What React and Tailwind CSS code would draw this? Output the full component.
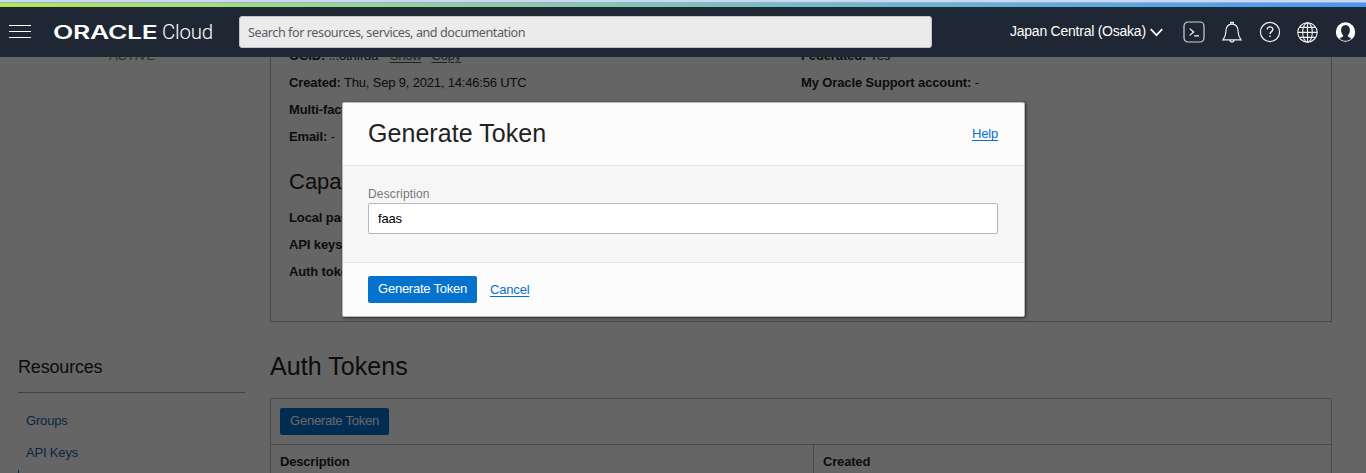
import React from "react";

function Row({ label, children }) {
  return (
    <div className="h-[27px] whitespace-nowrap leading-[27px]">
      <span className="font-bold tracking-[-0.12px]">{label}:</span> {children}
    </div>
  );
}

function Header() {
  return (
    <header className="flex h-[50px] shrink-0 items-center bg-[#1e2733] text-white">
      <div className="ml-[9px] flex w-[22px] flex-col gap-[5px] pb-[1px]">
        <span className="h-px bg-white" />
        <span className="h-px bg-white" />
        <span className="h-px bg-white" />
      </div>
      <svg className="ml-[21px] h-[24px] w-[164px]" viewBox="0 0 164 24" fill="#fff">
        <text x="1" y="19.4" fontFamily="Inter, sans-serif" fontSize="18" fontWeight="600" textLength="104.5" lengthAdjust="spacingAndGlyphs">ORACLE</text>
        <text x="110" y="19.4" fontFamily="Roboto, sans-serif" fontWeight="300" fontSize="20" textLength="51" lengthAdjust="spacingAndGlyphs">Cloud</text>
      </svg>
      <div className="ml-[23px] flex h-8 w-[693px] items-center rounded-[3px] border border-[#c0c4c8] bg-[#ebebeb] pl-2 font-['Noto_Sans',sans-serif] text-[12.6px] tracking-[-0.43px] text-[#5a5d61]">
        <span className="pt-[2px]">Search for resources, services, and documentation</span>
      </div>
      <div className="ml-[78px] flex w-[154px] items-center gap-[4px] pb-px text-[14px] tracking-[-0.24px] whitespace-nowrap">
        <span>Japan Central (Osaka)</span>
        <svg className="mt-[2px] h-[9px] w-[13px] shrink-0" viewBox="0 0 13 9" fill="none" stroke="#fff" strokeWidth="1.7">
          <path d="M.8 1.2 6.5 7.2 12.2 1.2" />
        </svg>
      </div>
      <svg className="ml-[18px] h-6 w-6 shrink-0" viewBox="0 0 24 24" fill="none" stroke="#d0d3d6">
        <rect x="2" y="2" width="20" height="20" rx="4" strokeWidth="1.2" />
        <path d="M7.7 8.6 11.7 12 7.7 15.4M12.2 15.9H17" strokeWidth="1.2" stroke="#fff" />
      </svg>
      <svg className="ml-[14px] h-6 w-6 shrink-0" viewBox="0 0 24 24" fill="none" stroke="#f0f0f0" strokeWidth="1.2">
        <path d="M3 19.9C5 17.5 5.7 15.8 5.9 11.5 6 7 8.4 4.1 12 4.1S18 7 18.1 11.5C18.3 15.8 19 17.5 21 19.9ZM10.7 4V2.4H13.3V4M9.8 20.2C10.2 22.7 13.8 22.7 14.2 20.2" />
      </svg>
      <svg className="ml-[14px] h-6 w-6 shrink-0" viewBox="0 0 24 24" fill="none" stroke="#f0f0f0" strokeWidth="1.2">
        <circle cx="12" cy="12" r="9.6" />
        <path d="M9.2 9.6C9.2 6 14.8 6 14.8 9.4 14.8 11.6 12 11.6 12 14M12 15.4V17" strokeWidth="1.4" />
      </svg>
      <svg className="ml-[14px] h-6 w-6 shrink-0" viewBox="0 0 24 24" fill="none" stroke="#f0f0f0" strokeWidth="1.1">
        <circle cx="11.5" cy="12.4" r="9.7" />
        <ellipse cx="11.5" cy="12.4" rx="4.8" ry="9.7" />
        <path d="M11.5 2.7V22.1M1.8 12.4H21.2M3.2 7.4H19.8M3.2 17.4H19.8" />
      </svg>
      <svg className="ml-[14px] h-6 w-6 shrink-0" viewBox="0 0 24 24">
        <circle cx="11.5" cy="12" r="9.7" fill="#fff" />
        <path d="M11.5 5C8.6 5 7.1 7.2 7.1 10 7.1 12.4 8 14.2 9.3 15.4 9.2 16.9 7.2 17.4 5.6 18.4 8.5 21.6 14.5 21.6 17.4 18.4 15.8 17.4 13.8 16.9 13.7 15.4 15 14.2 15.9 12.4 15.9 10 15.9 7.2 14.4 5 11.5 5Z" fill="#1e2733" />
      </svg>
    </header>
  );
}

function Dialog() {
  return (
    <div className="absolute top-[45px] left-[342px] flex h-[215px] w-[683px] flex-col rounded-[2px] border border-[#b4b9be] bg-[#fcfcfc] shadow-[1px_1px_3px_rgba(20,30,30,0.8)]">
      <div className="flex h-[63px] items-center justify-between border-b border-[#e4e4e4] pr-[26px] pl-[25px]">
        <h2 className="text-[25px] tracking-[0.05px] text-[#222]">Generate Token</h2>
        <a className="text-[13px] text-[#0572ce] underline underline-offset-2">Help</a>
      </div>
      <div className="flex h-[97px] flex-col border-b border-[#e4e4e4] bg-[#f6f6f6] px-[25px] pt-[20px]">
        <label className="h-[17px] text-[12px] leading-[16px] tracking-[0.15px] text-[#777]">Description</label>
        <div className="flex h-[31px] w-[630px] items-center rounded-[2px] border border-[#b4b9c0] bg-white pl-[9px] text-[13px] text-black">faas</div>
      </div>
      <div className="flex h-[53px] items-center gap-[13px] px-[25px]">
        <button className="h-[27px] w-[109px] rounded-[2px] bg-[#0572ce] pb-[2px] text-[13px] tracking-[-0.24px] whitespace-nowrap text-white">Generate Token</button>
        <a className="pt-px text-[13px] text-[#0572ce] underline underline-offset-2">Cancel</a>
      </div>
    </div>
  );
}

export default function App() {
  return (
    <div className="flex h-[473px] w-[1366px] flex-col overflow-hidden bg-[#fdfdfd] font-['Liberation_Sans',Arial,sans-serif] text-[13px] tracking-[-0.18px] text-[#222]">
      <div className="h-[2px] shrink-0 bg-[#c9d8f5]" />
      <div className="h-px shrink-0 bg-[#a3adc8]" />
      <div className="h-[4px] shrink-0 bg-linear-to-r from-[#b2e94a] to-[#4796f7]" />
      <Header />
      <div className="relative h-[416px] overflow-hidden">
        <div className="flex">
          <aside className="ml-[18px] w-[227px] shrink-0">
            <div className="-mt-[9px] h-[15px] pl-px text-center text-[13px] leading-[15px] text-[#5c9230]">ACTIVE</div>
            <h3 className="mt-[292px] h-[24px] text-[18px] leading-[24px]">Resources</h3>
            <div className="mt-[13px] border-t border-[#9ea5ab]" />
            <nav className="mt-[12px] flex flex-col text-[#1b5f9e]">
              <a className="h-8 pl-2 leading-8">Groups</a>
              <a className="h-8 pl-2 leading-8">API Keys</a>
              <span className="mt-px h-8 border-l border-[#0572ce]" />
            </nav>
          </aside>
          <main className="ml-[25px] w-[1062px] shrink-0">
            <section className="-mt-[16px] grid h-[281px] grid-cols-[512px_1fr] content-start border border-[#b4b4b4] pl-[18px]">
              <div>
                <Row label="OCID">
                  ...otnfrda <span className="ml-[8px] text-[#555] underline underline-offset-2">Show</span>
                  <span className="ml-[10px] text-[#555] underline underline-offset-2">Copy</span>
                </Row>
                <Row label="Created">Thu, Sep 9, 2021, 14:46:56 UTC</Row>
                <div className="w-[60px] overflow-hidden">
                  <Row label="Multi-factor" />
                </div>
                <Row label="Email">-</Row>
                <h3 className="mt-[18px] mb-[9px] h-[27px] w-[60px] overflow-hidden text-[22px] leading-[27px] tracking-normal">Capabilities</h3>
                <div className="w-[60px] overflow-hidden">
                  <Row label="Local password" />
                  <Row label="API keys" />
                  <Row label="Auth tokens" />
                </div>
              </div>
              <div>
                <Row label="Federated">Yes</Row>
                <Row label="My Oracle Support account">-</Row>
              </div>
            </section>
            <h2 className="mt-[28px] h-[32px] text-[25px] leading-[32px] tracking-[0.05px]">Auth Tokens</h2>
            <section className="mt-[16px] h-[100px] rounded-t-[2px] border border-[#b4bcc4]">
              <div className="flex h-[46px] items-center border-b border-[#b4bcc4] pl-[9px]">
                <button className="h-[27px] w-[109px] rounded-[2px] bg-[#0572ce] pb-[2px] tracking-[-0.24px] whitespace-nowrap text-white">Generate Token</button>
              </div>
              <div className="grid h-[33px] grid-cols-[543px_1fr] leading-[33px] font-bold">
                <div className="border-r border-[#b4bcc4] pl-[9px]">Description</div>
                <div className="pl-[9px]">Created</div>
              </div>
            </section>
          </main>
        </div>
        <div className="absolute inset-0 bg-black/60" />
        <Dialog />
      </div>
    </div>
  );
}
